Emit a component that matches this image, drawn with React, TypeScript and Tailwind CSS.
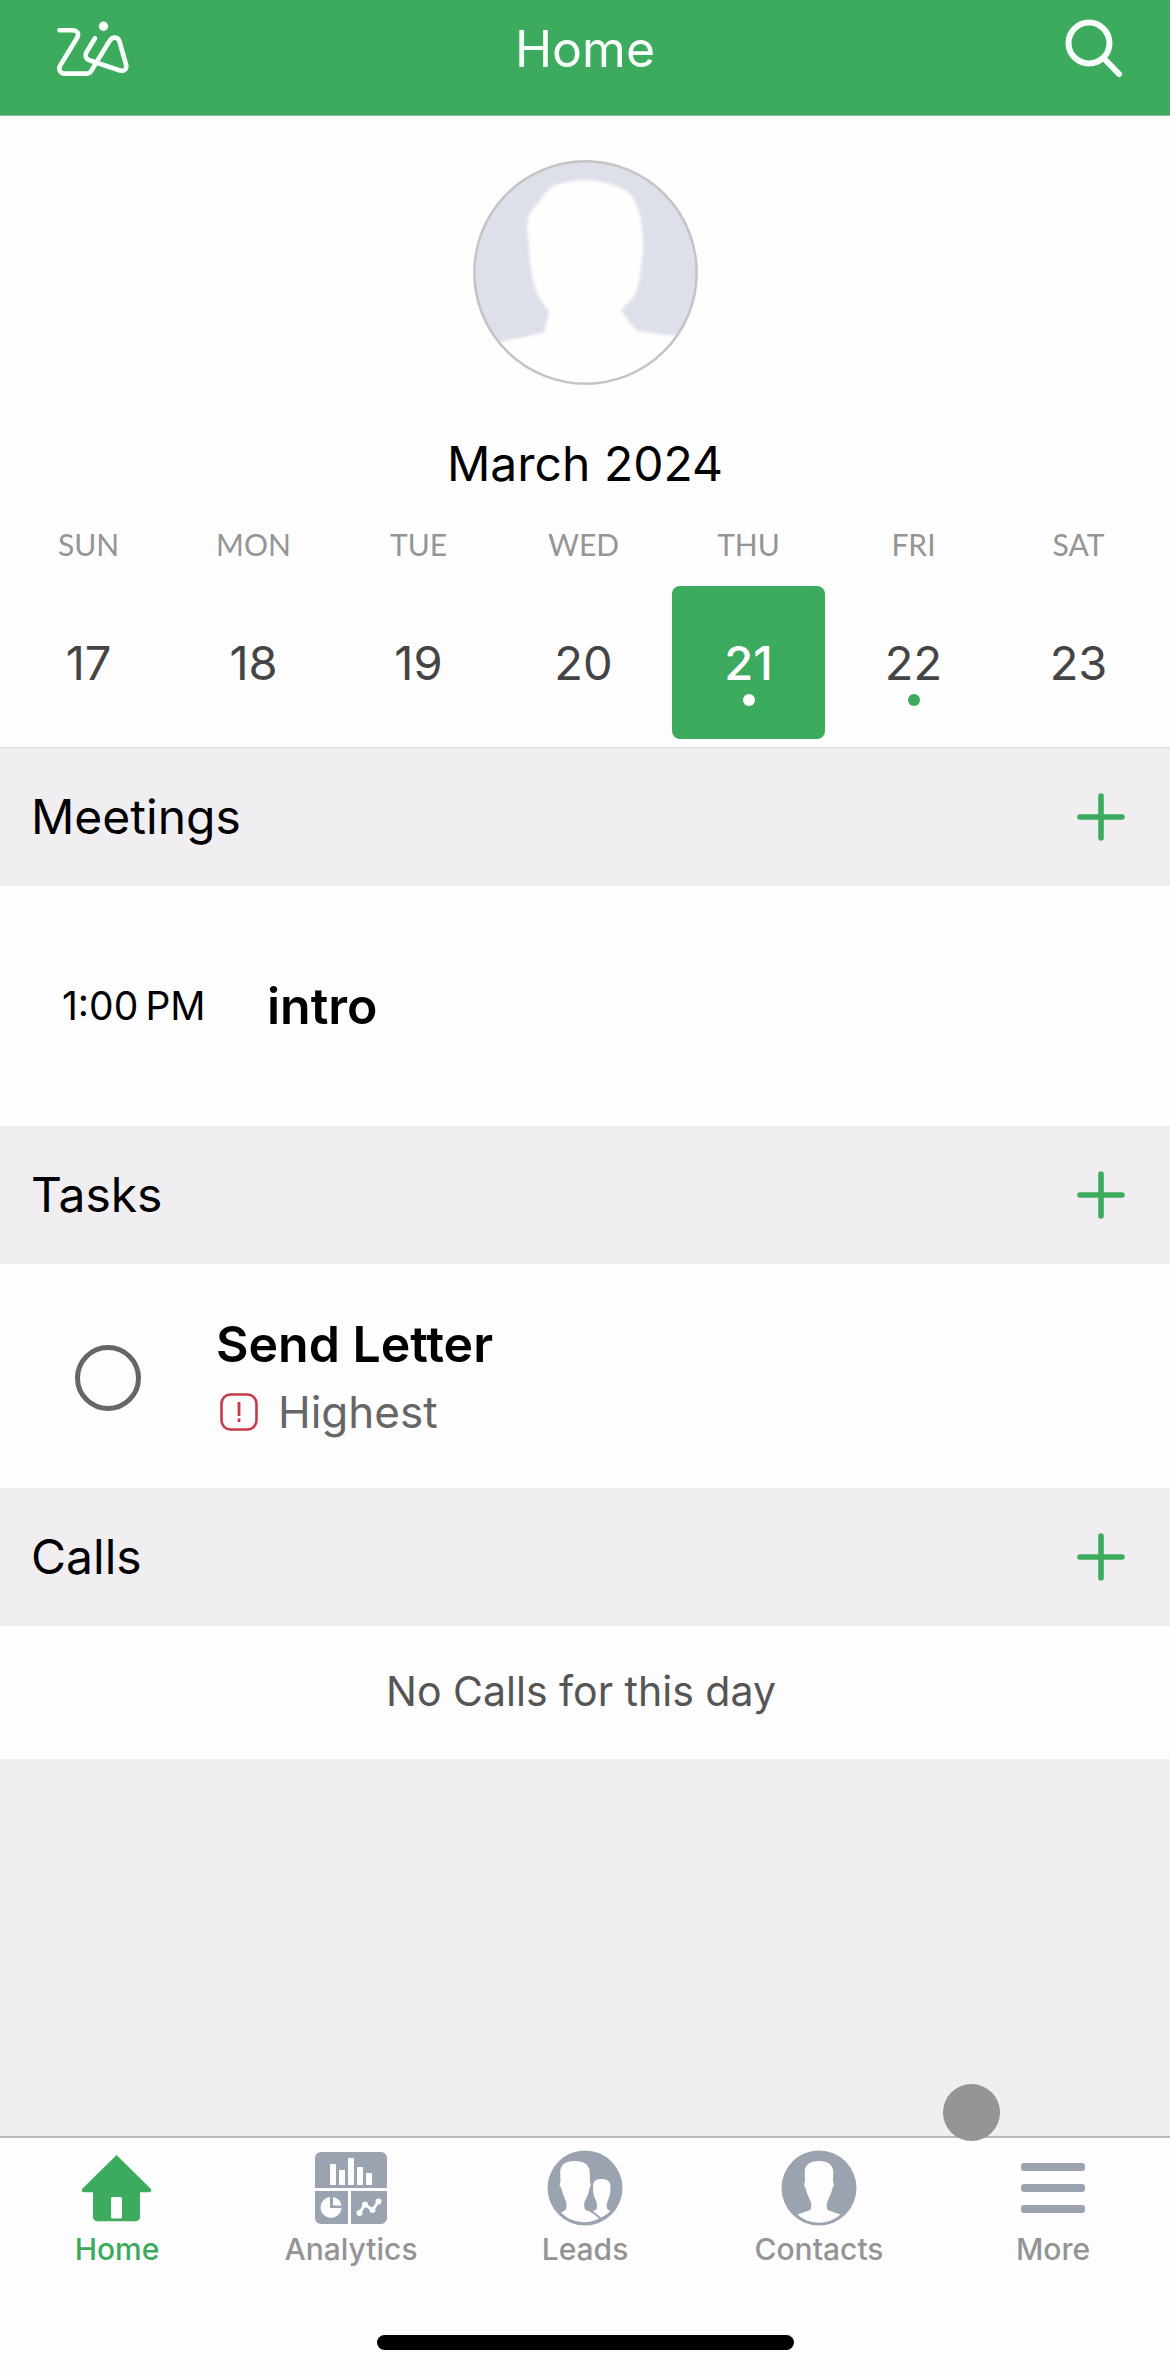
import type { ReactNode } from 'react';

interface Day {
  label: string;
  name: string;
  date: number;
  hasEvent?: boolean;
}

interface SectionHeaderProps {
  title: string;
}

interface TabProps {
  label: string;
  active?: boolean;
  children: ReactNode;
}

const days: Day[] = [
  { label: 'SUN', name: 'Sunday', date: 17 },
  { label: 'MON', name: 'Monday', date: 18 },
  { label: 'TUE', name: 'Tuesday', date: 19 },
  { label: 'WED', name: 'Wednesday', date: 20 },
  { label: 'THU', name: 'Thursday', date: 21, hasEvent: true },
  { label: 'FRI', name: 'Friday', date: 22, hasEvent: true },
  { label: 'SAT', name: 'Saturday', date: 23 },
];

const selectedDate = 21;

const ZiaIcon = () => (
  <svg width="82" height="60" viewBox="48 19 82 60" fill="none" stroke="currentColor" strokeWidth="4.6" strokeLinecap="round" strokeLinejoin="round">
    <path d="M59.5 30.3H72c5.500 0 7.500 3.500 5 7.700L60.500 65c-2.500 4-.5 8.600 4 8.600H87c2 0 3-.8 4-2.300L109.500 41c3-4.800 8.500-4.300 10 .5l6.500 23c1.300 4.500-2 7.300-6 6L90 60.500c-4.500-1.500-5.500-5-3.500-8.500l8.500-13.800" />
    <circle cx="103.500" cy="26.300" r="4.700" fill="currentColor" stroke="none" />
  </svg>
);

const SearchIcon = () => (
  <svg width="60" height="62" viewBox="0 0 60 62" fill="none" stroke="currentColor" strokeWidth="6">
    <circle cx="27" cy="25" r="20.500" />
    <path d="M42 40.500 57 56" strokeLinecap="round" />
  </svg>
);

const PlusIcon = () => (
  <svg width="48" height="48" viewBox="0 0 48 48" fill="none" stroke="currentColor" strokeWidth="5.600" strokeLinecap="round">
    <path d="M24 3v42M3 24h42" />
  </svg>
);

const Avatar = () => (
  <svg width="225" height="225" viewBox="0 0 225 225" role="img" aria-label="Profile picture">
    <defs>
      <clipPath id="avatar-clip">
        <circle cx="112.500" cy="112.500" r="111" />
      </clipPath>
      <filter id="avatar-soft">
        <feGaussianBlur stdDeviation="1.500" />
      </filter>
    </defs>
    <g clipPath="url(#avatar-clip)">
      <rect width="225" height="225" fill="#dddfe9" />
      <path
        fill="#fefefe"
        filter="url(#avatar-soft)"
        d="M114 20c-12 0-22 2-33 5-6 5-11 9-14 16-6 6-11 12-12 19-2 10 0 18 1 24 0 13 2 30 6 44 3 9 9 17 14 23-1 8-4 13-4 21-14 4-28 6-42 9l-20 8v45h230v-45l-34-13c-14-1-30-3-43-6-5-6-10-13-15-20 5-6 13-11 16-20 3-11 4-21 5-31 2-11 1-20 0-30-1-12-4-23-10-33-8-9-22-14-45-16z"
      />
    </g>
    <circle cx="112.500" cy="112.500" r="111.200" fill="none" stroke="#c4c4c6" strokeWidth="2.500" />
  </svg>
);

const PriorityIcon = () => (
  <svg width="38" height="38" viewBox="0 0 38 38" fill="none" stroke="#c9384a" strokeWidth="2.600">
    <rect x="1.500" y="1.500" width="35" height="35" rx="9" />
    <path d="M19 9v14M19 25.500v3.500" strokeWidth="2.800" />
  </svg>
);

const HomeIcon = () => (
  <svg width="70" height="67" viewBox="0 0 70 67" fill="currentColor">
    <path d="M34.500 0 68.500 33.500c1.500 2 .8 3.700-1.500 3.700h-9V62a4.300 4.300 0 0 1-4.300 4.300H15.300A4.300 4.300 0 0 1 11 62V37.200H2c-2.300 0-3-1.700-1.500-3.700z" />
    <rect x="29" y="42" width="11" height="21.500" rx="1.500" fill="#fdfdfd" />
  </svg>
);

const AnalyticsIcon = () => (
  <svg width="72" height="72" viewBox="0 0 72 72">
    <path fill="currentColor" d="M6 0h60a6 6 0 0 1 6 6v30H0V6a6 6 0 0 1 6-6zM0 39h33v33H6a6 6 0 0 1-6-6zM36 39h36v27a6 6 0 0 1-6 6H36z" />
    <path fill="#fdfdfd" d="M15 12h6v21h-6zM24 18h6v15h-6zM33 6h6v27h-6zM42 15h6v18h-6zM51 21h6v12h-6z" />
    <path fill="#fdfdfd" d="M15 45v11h11.500A10.500 10.500 0 1 1 15 45zM18 45a10 10 0 0 1 8.500 8.500H18z" />
    <g fill="#fdfdfd">
      <path d="M44.500 61 50 52.500l7.500 5.500 6-8.500" fill="none" stroke="#fdfdfd" strokeWidth="3" />
      <circle cx="44.500" cy="61" r="3" />
      <circle cx="50" cy="52.500" r="3" />
      <circle cx="57.500" cy="58" r="3" />
      <circle cx="63.500" cy="49.500" r="3" />
    </g>
  </svg>
);

const LeadsIcon = () => (
  <svg width="76" height="76" viewBox="0 0 76 76">
    <circle cx="38" cy="38" r="37.500" fill="currentColor" />
    <path
      fill="#fdfdfd"
      d="M27.500 11c-9 0-14 4-14.300 10.500L13.500 32c-1.500 1-.8 5 .8 6 1 5 3 9.500 5 14.500.5 3 .2 5-.8 7.500l-4.500 2.500C24 73 40 75 52 68.500c-4-4-8-6.500-13.500-8.500-1.500-3-1.700-5-1-8 2.500-5 4.500-9 5-14 1.500-2 1.500-4 .5-6l-.3-10.500C42.500 15 37 11 27.500 11z"
    />
    <path
      fill="#fdfdfd"
      d="M54.500 29c-5 0-8 2-8.300 6-.5 5 0 10 2 14 1.500 3 2.500 6 1.300 10.500L46 61l8 6.500c3.500-1.500 6.500-3.500 9.500-6.500l-3-1.500c-1.500-4.500-.5-7 1-10.500 1.800-4 2.300-9 1.800-14-.5-4-3.500-6-8.800-6z"
    />
  </svg>
);

const ContactsIcon = () => (
  <svg width="76" height="76" viewBox="0 0 76 76">
    <circle cx="38" cy="38" r="37.500" fill="currentColor" />
    <path
      fill="#fdfdfd"
      d="M38 11c-9 0-14 4-14.300 10.500L24 32c-1.500 1-1 5 .6 6 .8 5 3.400 9.500 5.400 14.500.5 3 .2 5-.6 7.500L16.500 64.500c12 11 31 11 43 0L46.600 60c-1-3-1.100-5-.6-7.500 2-5 4.600-9.500 5.400-14.500 1.600-1 2.100-5 .6-6l.3-10.500C52 15 47 11 38 11z"
    />
  </svg>
);

const MoreIcon = () => (
  <svg width="64" height="52" viewBox="0 0 64 52" fill="currentColor">
    <rect y="1" width="64" height="8" rx="3" />
    <rect y="22" width="64" height="8" rx="3" />
    <rect y="43" width="64" height="8" rx="3" />
  </svg>
);

const SectionHeader = ({ title }: SectionHeaderProps) => (
  <div className="flex items-center justify-between bg-[#f0eef1] h-[138px] pl-[31px] pr-[45px]">
    <h2 className="text-[48px] leading-[60px]">{title}</h2>
    <button type="button" aria-label={`Add to ${title}`} className="text-[#3dab5e]">
      <PlusIcon />
    </button>
  </div>
);

const Tab = ({ label, active, children }: TabProps) => (
  <a
    href={`#${label.toLowerCase()}`}
    aria-current={active ? 'page' : undefined}
    className={`flex flex-1 flex-col items-center ${active ? 'text-[#3dab5e]' : 'text-[#9ba3b0]'}`}
  >
    <span className="flex h-[76px] items-center">{children}</span>
    <span className={`mt-[5px] text-[30px] leading-9 font-medium ${active ? 'text-[#3dab5e]' : 'text-[#949496]'}`}>
      {label}
    </span>
  </a>
);

export default function App() {
  return (
    <div className="flex min-h-screen flex-col bg-[#f0eef1] font-['Inter',sans-serif] text-black">
      <header className="grid grid-cols-[1fr_auto_1fr] items-center border-b border-[#93b9a1] bg-[#3dab5e] px-12 pt-[18px] pb-[35px] text-[#f8fffa]">
        <button type="button" aria-label="Zia" className="justify-self-start">
          <ZiaIcon />
        </button>
        <h1 className="text-[50px] leading-[60px]">Home</h1>
        <button type="button" aria-label="Search" className="justify-self-end">
          <SearchIcon />
        </button>
      </header>

      <main>
        <section className="flex flex-col items-center border-b border-[#dddbde] bg-[#fdfdfd] pt-11 pb-2">
          <Avatar />
          <h2 className="mt-[49px] text-[48px] leading-[60px]">March 2024</h2>

          <div className="mt-8 flex w-full pr-[9px] pl-[6px]">
            {days.map((day) => {
              const selected = day.date === selectedDate;
              return (
                <div key={day.date} className="flex flex-1 flex-col items-center">
                  <span className="font-['Lato',sans-serif] text-[30px] leading-9 text-[#959595]">{day.label}</span>
                  <button
                    type="button"
                    aria-label={`${day.name} ${day.date}`}
                    aria-pressed={selected}
                    className={`mt-6 flex h-[153px] w-[153px] flex-col items-center rounded-lg pt-12 text-[47px] leading-[58px] ${
                      selected ? 'bg-[#3dab5e] font-medium text-white' : 'text-[#444444]'
                    }`}
                  >
                    {day.date}
                    {day.hasEvent && (
                      <span className={`mt-[2px] h-3 w-3 rounded-full ${selected ? 'bg-white' : 'bg-[#3dab5e]'}`} />
                    )}
                  </button>
                </div>
              );
            })}
          </div>
        </section>

        <section>
          <SectionHeader title="Meetings" />
          <div className="flex items-center bg-[#fdfdfd] px-[62px] py-[90px]">
            <span className="w-[205px] text-[39px] leading-[60px]">1:00{'\u202f'}PM</span>
            <span className="text-[50px] leading-[60px] font-semibold">intro</span>
          </div>
        </section>

        <section>
          <SectionHeader title="Tasks" />
          <div className="flex items-center bg-[#fdfdfd] pt-12 pb-11 pl-[75px]">
            <input
              id="send-letter"
              type="checkbox"
              className="h-[66px] w-[66px] appearance-none rounded-full border-[5px] border-[#666666] checked:bg-[#3dab5e]"
            />
            <div className="ml-[75px] flex flex-col">
              <label htmlFor="send-letter" className="text-[50px] leading-[64px] font-semibold">
                Send Letter
              </label>
              <div className="mt-1 flex items-center gap-5 pl-1">
                <PriorityIcon />
                <span className="text-[44px] leading-[64px] text-[#666666]">Highest</span>
              </div>
            </div>
          </div>
        </section>

        <section>
          <SectionHeader title="Calls" />
          <p className="bg-[#fdfdfd] pt-[35px] pr-2 pb-[38px] text-center text-[41px] leading-[60px] text-[#555555]">
            No Calls for this day
          </p>
        </section>
      </main>

      <footer className="relative mt-auto border-t-2 border-[#b9b7ba] bg-[#fdfdfd] pt-3 pb-6">
        <span className="absolute -top-[54px] right-[170px] h-[57px] w-[57px] rounded-full bg-[#969495]" />
        <nav className="flex">
          <Tab label="Home" active>
            <HomeIcon />
          </Tab>
          <Tab label="Analytics">
            <AnalyticsIcon />
          </Tab>
          <Tab label="Leads">
            <LeadsIcon />
          </Tab>
          <Tab label="Contacts">
            <ContactsIcon />
          </Tab>
          <Tab label="More">
            <MoreIcon />
          </Tab>
        </nav>
        <div className="mx-auto mt-[68px] h-[15px] w-[417px] rounded-full bg-black" />
      </footer>
    </div>
  );
}
